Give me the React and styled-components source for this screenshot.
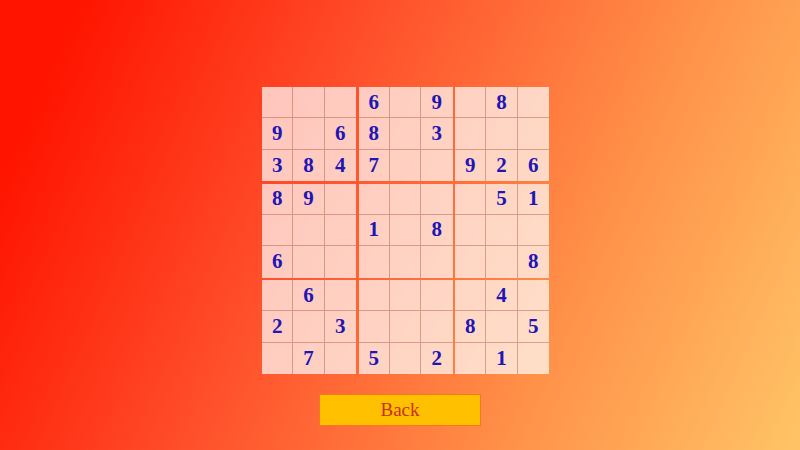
import React from 'react';
import styled, { createGlobalStyle } from 'styled-components';

const GlobalStyle = createGlobalStyle`
    html, body {
        margin: 0;
        padding: 0;
        width: 100%;
        height: 100%;
    }
    body {
        font-family: "Liberation Serif", "Times New Roman", serif;
        background: linear-gradient(114deg, #ff1400 8%, #ff4e2a 38%, #ff9048 70%, #ffc466 100%);
        overflow: hidden;
    }
`;

const Page = styled.main`
    width: 800px;
    height: 450px;
    box-sizing: border-box;
    padding-top: 87px;
    display: flex;
    flex-direction: column;
    align-items: center;
`;

const Board = styled.div`
    display: grid;
    grid-template-columns: repeat(3, 94px);
    grid-template-rows: repeat(3, 94px);
    gap: 2.5px;
    margin-left: 11px;
`;

const Box = styled.div`
    display: grid;
    grid-template-columns: repeat(3, 1fr);
    grid-template-rows: repeat(3, 1fr);
    background: rgba(255, 255, 255, 0.7);
`;

const Cell = styled.div`
    box-sizing: border-box;
    display: flex;
    align-items: center;
    justify-content: center;
    border-right: ${p => (p.$lastCol ? 'none' : '1px solid rgba(160, 70, 40, 0.4)')};
    border-bottom: ${p => (p.$lastRow ? 'none' : '1px solid rgba(160, 70, 40, 0.4)')};
    font-size: 21px;
    font-weight: bold;
    color: #2016b4;
`;

const BackButton = styled.button`
    margin-top: 20px;
    width: 162px;
    height: 32px;
    background: #ffc000;
    border: 1px solid #f07a20;
    color: #c8301a;
    font-family: "Liberation Serif", "Times New Roman", serif;
    font-size: 19px;
    cursor: pointer;
`;

const puzzle = [
    '   6 9 8 ',
    '9 68 3   ',
    '3847  926',
    '89     51',
    '   1 8   ',
    '6       8',
    ' 6     4 ',
    '2 3   8 5',
    ' 7 5 2 1 ',
];

function Sudoku() {
    const boxes = [];
    for (let b = 0; b < 9; b++) {
        const br = Math.floor(b / 3) * 3;
        const bc = (b % 3) * 3;
        const cells = [];
        for (let i = 0; i < 9; i++) {
            const r = Math.floor(i / 3);
            const c = i % 3;
            const v = puzzle[br + r][bc + c];
            cells.push(
                <Cell key={i} $lastCol={c === 2} $lastRow={r === 2}>
                    {v.trim()}
                </Cell>
            );
        }
        boxes.push(<Box key={b}>{cells}</Box>);
    }
    return <Board>{boxes}</Board>;
}

export default function App() {
    return (
        <>
            <GlobalStyle />
            <Page>
                <Sudoku />
                <BackButton>Back</BackButton>
            </Page>
        </>
    );
}
